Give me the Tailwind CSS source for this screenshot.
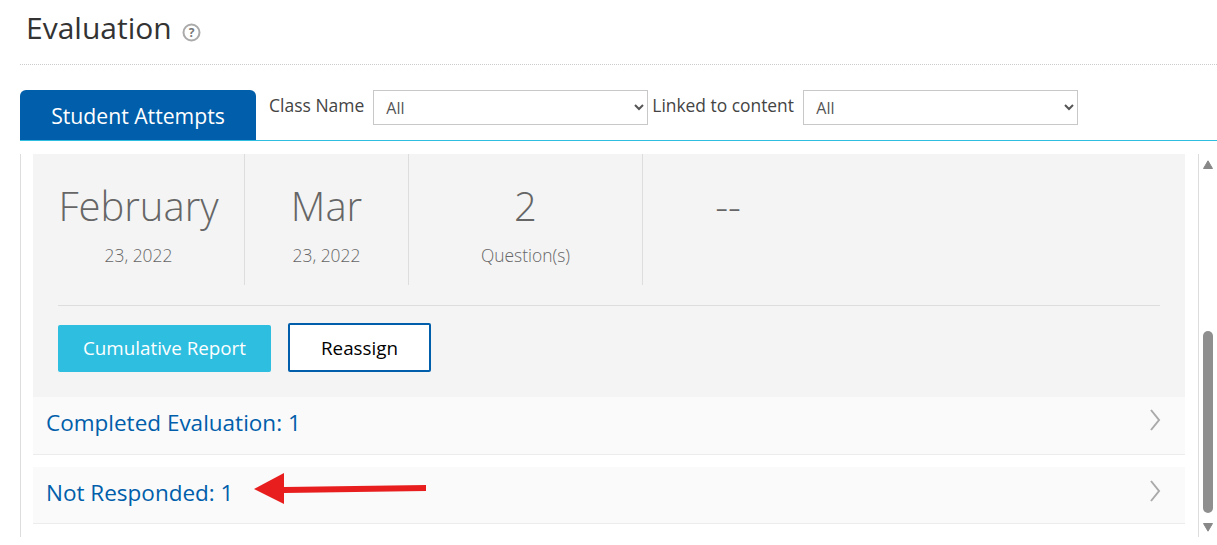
<!DOCTYPE html>
<html lang="en">
<head>
  <meta charset="UTF-8" />
  <title>Evaluation</title>
  <script src="https://cdn.jsdelivr.net/npm/@tailwindcss/browser@4"></script>
</head>
<body class="bg-white h-[545px] overflow-hidden font-['Open_Sans',sans-serif] text-[#333]">
  <div class="pl-5">
    <!-- page title -->
    <div class="h-[65px] border-b border-dotted border-[#ccc] pl-[6px] pt-[8px] flex items-start">
      <h1 class="text-[30px] leading-[40px] text-[#333]">Evaluation</h1>
      <svg class="ml-[10px] mt-[15px]" width="19" height="19" viewBox="0 0 19 19">
        <circle cx="9.500" cy="9.500" r="8" fill="none" stroke="#aaa" stroke-width="2"/>
        <text x="9.500" y="14" text-anchor="middle" font-size="12" font-weight="700" font-family="Open Sans" fill="#777">?</text>
      </svg>
    </div>

    <!-- tab row -->
    <div class="mt-[25px] h-[51px] border-b border-[#2dbee0] flex items-start">
      <div class="w-[236px] h-[50px] bg-[#005eaa] rounded-t-md text-white text-[21.200px] leading-[52px] text-center">Student Attempts</div>
      <label class="ml-[13px] text-[17.500px] leading-[30px] text-[#444]">Class Name</label>
      <select class="ml-[9px] w-[275px] h-[35px] border border-[#c8c8c8] bg-white pl-[8px] text-[16px] text-[#555]"><option>All</option></select>
      <label class="ml-[4px] w-[142px] whitespace-nowrap text-[17.400px] leading-[30px] text-[#444]">Linked to content</label>
      <select class="ml-[9px] w-[275px] h-[35px] border border-[#c8c8c8] bg-white pl-[8px] text-[16px] text-[#555]"><option>All</option></select>
    </div>

    <!-- scroll area -->
    <div class="mt-[13px] flex h-[383px]">
      <div class="flex-1 border-l border-[#ddd] pl-3 overflow-hidden">
        <div class="w-[1152px]">
          <div class="bg-[#f4f4f4] h-[243px] pl-[25px] pr-[25px]">
            <div class="flex h-[131px] text-center">
              <div class="w-[187px] border-r border-[#ddd] pr-[25px] whitespace-nowrap">
                <div class="text-[40px] font-light leading-[54px] pt-[25px] text-[#666]">February</div>
                <div class="text-[17.400px] font-light leading-[24px] mt-[10px] text-[#666]">23, 2022</div>
              </div>
              <div class="w-[164px] border-r border-[#ddd]">
                <div class="text-[40px] font-light leading-[54px] pt-[25px] text-[#666]">Mar</div>
                <div class="text-[17.400px] font-light leading-[24px] mt-[10px] text-[#666]">23, 2022</div>
              </div>
              <div class="w-[234px] border-r border-[#ddd]">
                <div class="text-[40px] font-light leading-[54px] pt-[25px] text-[#666]">2</div>
                <div class="text-[17.400px] font-light leading-[24px] mt-[10px] text-[#666]">Question(s)</div>
              </div>
              <div class="w-[170px]">
                <div class="text-[40px] font-light leading-[54px] pt-[25px] text-[#666]">--</div>
              </div>
            </div>
            <div class="mt-5 border-t border-[#ddd] pt-[17px] flex items-start gap-[17px]">
              <button class="w-[213px] h-[47px] mt-[2px] bg-[#2dbee0] rounded-[2px] text-white text-[18.800px]">Cumulative Report</button>
              <button class="w-[143px] h-[49px] pt-[2px] bg-white border-2 border-[#005eaa] rounded-[2px] text-black text-[18.800px]">Reassign</button>
            </div>
          </div>
          <div class="bg-[#fafafa] h-[58px] border-b border-[#ececec] pl-[13px] pr-6 pb-[6px] flex items-center justify-between">
            <span class="text-[#005eaa] text-[22.500px]">Completed Evaluation: 1</span>
            <svg class="mb-[5px]" width="12" height="22" viewBox="0 0 12 22"><path d="M2 1l8 10-8 10" fill="none" stroke="#aaa" stroke-width="2"/></svg>
          </div>
          <div class="mt-3 bg-[#fafafa] h-[57px] border-b border-[#ececec] pl-[13px] pr-6 pb-[4px] flex items-center justify-between relative">
            <span class="text-[#005eaa] text-[22.500px]">Not Responded: 1</span>
            <svg class="mb-[5px]" width="12" height="22" viewBox="0 0 12 22"><path d="M2 1l8 10-8 10" fill="none" stroke="#aaa" stroke-width="2"/></svg>
            <svg class="absolute left-[220px] top-[6px]" width="175" height="34" viewBox="0 0 175 34">
              <path d="M1 16 31 0v14l142-2v6L31 20v11z" fill="#e81e1e"/>
            </svg>
          </div>
        </div>
      </div>
      <!-- scrollbar -->
      <div class="w-[19px] border-l border-[#ddd] relative shrink-0">
        <svg class="absolute left-[4px] top-[6px]" width="10" height="9" viewBox="0 0 10 9"><path d="M5 .8 9.500 8.500H.5z" fill="#888" stroke="#888" stroke-width="1" stroke-linejoin="round"/></svg>
        <div class="absolute left-[4px] top-[177px] w-[10px] h-[182px] rounded-[5px] bg-[#8f8f8f]"></div>
        <svg class="absolute left-[4px] top-[369px]" width="10" height="9" viewBox="0 0 10 9"><path d="M5 8.200 9.500 .5H.5z" fill="#888" stroke="#888" stroke-width="1" stroke-linejoin="round"/></svg>
      </div>
    </div>
  </div>
</body>
</html>
